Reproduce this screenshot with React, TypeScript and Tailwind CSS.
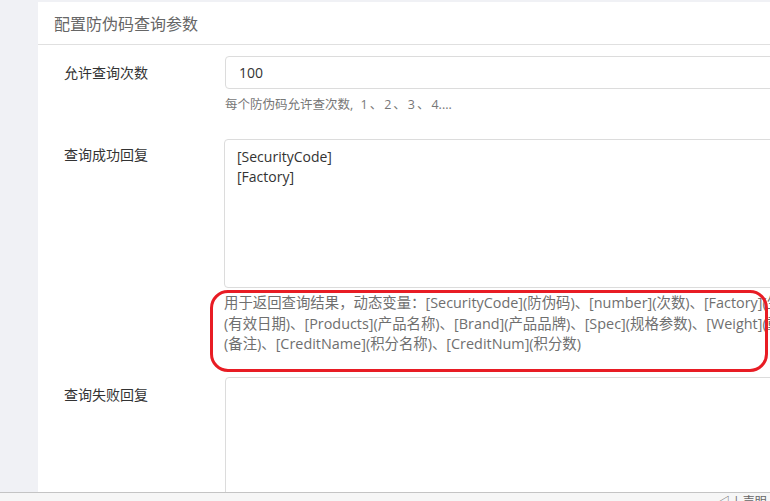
import React from 'react';

const cjk = '"Open Sans", "Noto Sans CJK SC", sans-serif';

const App = () => {
  return (
    <div
      className="w-[770px] h-[501px] overflow-hidden bg-[#f0f1f5] flex flex-col"
      style={{ fontFamily: cjk }}
    >
      <div className="flex-1 overflow-hidden pt-[2px] pl-[38px]">
        <div className="w-[820px] bg-white min-h-full">
          {/* header */}
          <div className="h-[43px] border-b border-[#e0e0e0] pl-[16px] flex items-center">
            <span className="text-[16px] text-[#666] leading-none" style={{ fontFamily: '"Noto Sans CJK SC", sans-serif' }}>
              配置防伪码查询参数
            </span>
          </div>

          <div className="pt-[11px]">
            {/* row 1 */}
            <div className="flex">
              <div className="w-[187px] shrink-0 pl-[26px] pt-[7px] text-[14px] leading-[20px] text-[#333]">允许查询次数</div>
              <div className="flex-1 min-w-0">
                <div className="h-[33px] border border-[#dcdcdc] rounded-[4px] pl-[13px] flex items-center text-[14px] text-[#333]">
                  100
                </div>
                <div className="mt-[7px] text-[12.5px] leading-[18px] text-[#777] whitespace-nowrap">
                  每个防伪码允许查次数<span className="tracking-[2px]">, 1、2、3、</span>4....
                </div>
              </div>
            </div>

            {/* row 2 */}
            <div className="flex mt-[25px]">
              <div className="w-[187px] shrink-0 pl-[26px] pt-[6px] text-[14px] leading-[20px] text-[#333]">查询成功回复</div>
              <div className="flex-1 min-w-0 -ml-[1px]">
                <div className="h-[149px] border border-[#dcdcdc] rounded-[4px] pl-[12px] pt-[7px] text-[14px] leading-[20px] text-[#333]">
                  <div>[SecurityCode]</div>
                  <div>[Factory]</div>
                </div>
                <div className="relative mt-[5px] text-[14.4px] leading-[20.5px] text-[#6f6f6f] whitespace-nowrap">
                  <div>用于返回查询结果，动态变量：[SecurityCode](防伪码)、[number](次数)、[Factory](生产厂家)、[ValidDate]</div>
                  <div>(有效日期)、[Products](产品名称)、[Brand](产品品牌)、[Spec](规格参数)、[Weight](重量)、[Remark]</div>
                  <div>(备注)、[CreditName](积分名称)、[CreditNum](积分数)</div>
                  <div className="absolute left-[-14px] top-[-3px] w-[558px] h-[82px] border-[3px] border-[#e81c24] rounded-[18px] pointer-events-none" />
                </div>
              </div>
            </div>

            {/* row 3 */}
            <div className="flex mt-[22px]">
              <div className="w-[187px] shrink-0 pl-[26px] pt-[8px] text-[14px] leading-[20px] text-[#333]">查询失败回复</div>
              <div className="flex-1 min-w-0">
                <div className="h-[149px] border border-[#dcdcdc] rounded-[4px]" />
              </div>
            </div>
          </div>
        </div>
      </div>

      {/* bottom bar */}
      <div className="h-[9px] shrink-0 border-t border-[#c4c4c4] bg-[#f6f6f6] relative overflow-hidden">
        <div className="absolute left-[718px] top-[2px] text-[12px] leading-[14px] text-[#666] whitespace-nowrap">◁ | 声明</div>
      </div>
    </div>
  );
};

export default App;
